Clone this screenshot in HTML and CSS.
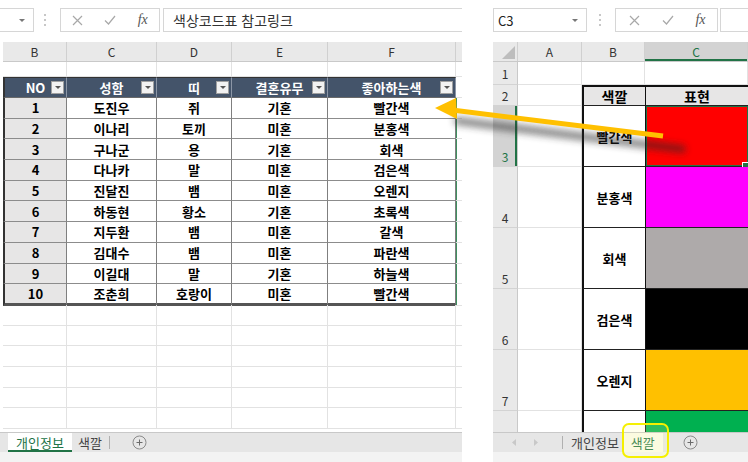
FILE: index.html
```html
<!DOCTYPE html>
<html lang="ko">
<head>
<meta charset="utf-8">
<title>색상코드표</title>
<link rel="stylesheet" href="styles.css">
</head>
<body>
<div class="screen">
  <section class="pane pane-left">
    <div class="fbar">
      <div class="namebox nb-left"><span class="dd"></span></div>
      <div class="grip"><svg width="4" height="14" viewBox="0 0 4 14"><circle cx="2" cy="2" r="1" fill="#b4b4b4"/><circle cx="2" cy="7" r="1" fill="#b4b4b4"/><circle cx="2" cy="12" r="1" fill="#b4b4b4"/></svg></div>
      <div class="btns">
        <span class="ib"><svg width="11" height="11" viewBox="0 0 11 11"><path d="M1 1L10 10M10 1L1 10" stroke="#a8a8a8" stroke-width="1.2"/></svg></span>
        <span class="ib"><svg width="12" height="10" viewBox="0 0 12 10"><path d="M1 5.5L4.5 9L11 1" stroke="#a8a8a8" stroke-width="1.2" fill="none"/></svg></span>
        <span class="ib fx">fx</span>
      </div>
      <div class="formula">색상코드표 참고링크</div>
    </div>

    <div class="lcols colhdr">
      <div>B</div><div>C</div><div>D</div><div>E</div><div>F</div><div class="edge"></div>
    </div>

    <div class="lsheet">
      <div class="lrow r-first"><div></div><div></div><div></div><div></div><div></div><div></div></div>
      <div class="lrow thead">
        <div class="th c-b">NO<span class="fb"></span></div>
        <div class="th">성함<span class="fb"></span></div>
        <div class="th">띠<span class="fb"></span></div>
        <div class="th">결혼유무<span class="fb"></span></div>
        <div class="th">좋아하는색<span class="fb"></span></div>
        <div class="x"></div>
      </div>
      <div class="lrow tr"><div class="td no">1</div><div class="td">도진우</div><div class="td">쥐</div><div class="td">기혼</div><div class="td">빨간색</div><div class="x g"></div></div>
      <div class="lrow tr"><div class="td no">2</div><div class="td">이나리</div><div class="td">토끼</div><div class="td">미혼</div><div class="td">분홍색</div><div class="x g"></div></div>
      <div class="lrow tr"><div class="td no">3</div><div class="td">구나군</div><div class="td">용</div><div class="td">기혼</div><div class="td">회색</div><div class="x g"></div></div>
      <div class="lrow tr"><div class="td no">4</div><div class="td">다나카</div><div class="td">말</div><div class="td">미혼</div><div class="td">검은색</div><div class="x g"></div></div>
      <div class="lrow tr"><div class="td no">5</div><div class="td">진달진</div><div class="td">뱀</div><div class="td">미혼</div><div class="td">오렌지</div><div class="x g"></div></div>
      <div class="lrow tr"><div class="td no">6</div><div class="td">하동현</div><div class="td">황소</div><div class="td">기혼</div><div class="td">초록색</div><div class="x g"></div></div>
      <div class="lrow tr"><div class="td no">7</div><div class="td">지두환</div><div class="td">뱀</div><div class="td">미혼</div><div class="td">갈색</div><div class="x g"></div></div>
      <div class="lrow tr"><div class="td no">8</div><div class="td">김대수</div><div class="td">뱀</div><div class="td">미혼</div><div class="td">파란색</div><div class="x g"></div></div>
      <div class="lrow tr"><div class="td no">9</div><div class="td">이길대</div><div class="td">말</div><div class="td">기혼</div><div class="td">하늘색</div><div class="x g"></div></div>
      <div class="lrow tr last"><div class="td no">10</div><div class="td">조춘희</div><div class="td">호랑이</div><div class="td">미혼</div><div class="td">빨간색</div><div class="x g"></div></div>
      <div class="lrow"><div></div><div></div><div></div><div></div><div></div><div></div></div>
      <div class="lrow"><div></div><div></div><div></div><div></div><div></div><div></div></div>
      <div class="lrow"><div></div><div></div><div></div><div></div><div></div><div></div></div>
      <div class="lrow"><div></div><div></div><div></div><div></div><div></div><div></div></div>
      <div class="lrow"><div></div><div></div><div></div><div></div><div></div><div></div></div>
      <div class="lrow"><div></div><div></div><div></div><div></div><div></div><div></div></div>
    </div>

    <div class="tabbar tabbar-left">
      <div class="tab active">개인정보</div>
      <div class="tab">색깔</div>
      <div class="sep"></div>
      <div class="plus"><svg width="15" height="15" viewBox="0 0 15 15"><circle cx="7.5" cy="7.5" r="6.5" fill="none" stroke="#8a8a8a"/><path d="M7.5 4.5V10.5M4.5 7.5H10.5" stroke="#6a6a6a"/></svg></div>
    </div>
    <div class="strip"></div>
  </section>

  <section class="pane pane-right">
    <div class="fbar">
      <div class="namebox nb-right"><span class="nbtext">C3</span><span class="dd"></span></div>
      <div class="grip grip-r"><svg width="4" height="14" viewBox="0 0 4 14"><circle cx="2" cy="2" r="1" fill="#b4b4b4"/><circle cx="2" cy="7" r="1" fill="#b4b4b4"/><circle cx="2" cy="12" r="1" fill="#b4b4b4"/></svg></div>
      <div class="btns btns-r">
        <span class="ib"><svg width="11" height="11" viewBox="0 0 11 11"><path d="M1 1L10 10M10 1L1 10" stroke="#a8a8a8" stroke-width="1.2"/></svg></span>
        <span class="ib"><svg width="12" height="10" viewBox="0 0 12 10"><path d="M1 5.5L4.5 9L11 1" stroke="#a8a8a8" stroke-width="1.2" fill="none"/></svg></span>
        <span class="ib fx">fx</span>
      </div>
      <div class="formula formula-r"></div>
    </div>

    <div class="rcols colhdr">
      <div class="corner"><span class="tri"></span></div><div>A</div><div>B</div><div class="selcol">C</div>
    </div>

    <div class="rsheet">
      <div class="rh">1</div><div class="gc"></div><div class="gc"></div><div class="gc"></div>
      <div class="rh">2</div><div class="gc"></div><div class="tb th2 top">색깔</div><div class="tc th2 top">표현</div>
      <div class="rh selrow">3</div><div class="gc ga-sel"></div><div class="tb">빨간색</div><div class="tc sw selcell red"></div>
      <div class="rh">4</div><div class="gc"></div><div class="tb">분홍색</div><div class="tc sw magenta"></div>
      <div class="rh">5</div><div class="gc"></div><div class="tb">회색</div><div class="tc sw gray"></div>
      <div class="rh">6</div><div class="gc"></div><div class="tb">검은색</div><div class="tc sw black"></div>
      <div class="rh">7</div><div class="gc"></div><div class="tb">오렌지</div><div class="tc sw orange"></div>
      <div class="rh"></div><div class="gc"></div><div class="tb"></div><div class="tc sw green"></div>
    </div>

    <div class="tabbar tabbar-right">
      <div class="nav"><svg width="8" height="9" viewBox="0 0 8 9"><path d="M6 1L2 4.5L6 8" fill="#c8c8c8"/></svg></div>
      <div class="nav"><svg width="8" height="9" viewBox="0 0 8 9"><path d="M2 1L6 4.5L2 8" fill="#c8c8c8"/></svg></div>
      <div class="sep sep-r"></div>
      <div class="tab tab-r">개인정보</div>
      <div class="tab active-r">색깔</div>
      <div class="plus plus-r"><svg width="15" height="15" viewBox="0 0 15 15"><circle cx="7.5" cy="7.5" r="6.5" fill="none" stroke="#8a8a8a"/><path d="M7.5 4.5V10.5M4.5 7.5H10.5" stroke="#6a6a6a"/></svg></div>
    </div>
    <div class="strip"></div>
  </section>

  <svg class="arrow" width="748" height="462" viewBox="0 0 748 462">
    <defs>
      <filter id="sh" x="-20%" y="-200%" width="140%" height="500%"><feGaussianBlur stdDeviation="3.5"/></filter>
    </defs>
    <line x1="458" y1="121" x2="682" y2="149" stroke="#2a2a2a" stroke-width="8" stroke-linecap="round" opacity="0.55" filter="url(#sh)"/>
    <line x1="452" y1="110" x2="663" y2="136" stroke="#FFC000" stroke-width="5"/>
    <polygon points="435,108 456,98 457,119" fill="#FFC000"/>
  </svg>
  <div class="mark"></div>
</div>
</body>
</html>
```

FILE: styles.css
```css
* { box-sizing: border-box; }
html, body { margin: 0; padding: 0; background: #ffffff; }
body {
  font-family: "Noto Sans CJK KR", "Noto Sans", sans-serif;
  color: #000;
}
.screen {
  position: relative;
  width: 748px;
  height: 462px;
  overflow: hidden;
  display: flex;
  gap: 31px;
}
.pane {
  display: flex;
  flex-direction: column;
  overflow: hidden;
  height: 462px;
}
.pane-left { width: 462px; }
.pane-right { width: 255px; }

/* formula bar */
.fbar {
  margin-top: 8px;
  height: 24px;
  display: flex;
  align-items: stretch;
  flex: none;
}
.namebox {
  position: relative;
  border: 1px solid #d6d6d6;
  background: #fff;
  display: flex;
  align-items: center;
}
.nb-left { width: 34px; border-left: none; }
.nb-right { width: 94px; }
.nbtext { font-size: 13px; color: #222; padding-left: 4px; }
.dd {
  position: absolute;
  right: 8px;
  top: 10px;
  width: 0; height: 0;
  border-left: 3px solid transparent;
  border-right: 3px solid transparent;
  border-top: 3px solid #777;
}
.grip {
  width: 22px;
  margin-right: 4px;
  display: flex;
  align-items: center;
  justify-content: center;
}
.grip-r { width: 26px; margin-right: 2px; }
.btns {
  width: 100px;
  border: 1px solid #d6d6d6;
  display: flex;
  align-items: center;
}
.btns-r { width: 103px; padding-left: 2px; }
.ib {
  width: 33px;
  display: flex;
  align-items: center;
  justify-content: center;
}
.fx {
  font-family: "Liberation Serif", serif;
  font-style: italic;
  font-size: 14px;
  color: #555;
}
.formula {
  flex: 1;
  margin-left: 3px;
  border: 1px solid #d6d6d6;
  border-right: none;
  font-size: 14px;
  color: #333;
  padding-left: 9px;
  display: flex;
  align-items: center;
}
.formula-r { margin-left: 2px; }

/* column headers */
.colhdr {
  margin-top: 10px;
  height: 20px;
  flex: none;
  display: grid;
  background: #e9e9e9;
  border-bottom: 1px solid #c9c9c9;
}
.colhdr > div {
  border-right: 1px solid #d0d0d0;
  font-size: 12px;
  color: #333;
  display: flex;
  align-items: center;
  justify-content: center;
}
.lcols {
  grid-template-columns: 64px 90px 75px 96px 128px 6px;
  margin-left: 3px;
}
.lcols .edge { border-right: none; background: #e9e9e9; }
.rcols { grid-template-columns: 25px 64px 63px 103px; }
.corner { position: relative; }
.tri {
  position: absolute;
  right: 2px;
  bottom: 2px;
  width: 0; height: 0;
  border-left: 13px solid transparent;
  border-bottom: 13px solid #bdbdbd;
}
.selcol {
  background: #d3d3d3;
  color: #217346 !important;
  box-shadow: inset 0 -2px 0 #217346;
}

/* left sheet */
.lsheet {
  height: 370px;
  flex: none;
  overflow: hidden;
  padding-left: 3px;
}
.lrow {
  display: grid;
  grid-template-columns: 64px 90px 75px 96px 128px 6px;
  height: 20.7px;
}
.lrow > div {
  border-right: 1px solid #e2e2e2;
  border-bottom: 1px solid #e2e2e2;
  display: flex;
  align-items: center;
  justify-content: center;
  font-size: 13px;
  font-weight: 700;
}
.lrow > div:last-child { border-right: none; }
.r-first { height: 15px; }
.thead { height: 21px; }
.thead .th {
  position: relative;
  background: #44546a;
  color: #fff;
  border-right: 1px solid #8c96a6;
  border-bottom: 1px solid #6a6a6a;
  border-top: 1px solid #333;
}
.thead .c-b { border-left: 2px solid #333; }
.fb {
  position: absolute;
  right: 2px;
  top: 3px;
  width: 13px;
  height: 13px;
  background: #f2f2f2;
  border: 1px solid #a0a0a0;
}
.fb::after {
  content: "";
  position: absolute;
  left: 3px;
  top: 4px;
  border-left: 3px solid transparent;
  border-right: 3px solid transparent;
  border-top: 3px solid #555;
}
.tr .td {
  border-right: 1px solid #7f7f7f;
  border-bottom: 1px solid #8c8c8c;
  background: #fff;
}
.tr .no {
  background: #e7e6e6;
  border-left: 2px solid #333;
}
.tr.last .td { border-bottom: 3px solid #555; }
.x.g { box-shadow: inset 1px 0 0 #3f8f5f; }

/* right sheet */
.rsheet {
  height: 370px;
  flex: none;
  overflow: hidden;
  display: grid;
  grid-template-columns: 25px 64px 63px 103px;
  grid-template-rows: 23px 21px 61px 61px 61px 61px 61px 61px;
}
.rh {
  background: #e9e9e9;
  border-right: 1px solid #c9c9c9;
  border-bottom: 1px solid #d3d3d3;
  font-size: 12px;
  color: #333;
  display: flex;
  justify-content: center;
  align-items: flex-end;
  padding-bottom: 1px;
}
.rh:nth-child(1), .rh:nth-child(5) { align-items: center; padding-bottom: 0; }
.selrow {
  background: #d3d3d3;
  color: #217346;
  box-shadow: inset -2px 0 0 #217346;
}
.gc {
  border-right: 1px solid #e2e2e2;
  border-bottom: 1px solid #e2e2e2;
}
.tb, .tc {
  font-size: 13px;
  font-weight: 700;
  display: flex;
  align-items: center;
  justify-content: center;
  border-bottom: 1px solid #222;
}
.tb { border-left: 2px solid #111; }
.tc { border-left: 1.5px solid #111; }
.th2 { background: #e7e6e6; font-size: 14px; }
.top { border-top: 2px solid #111; }
.sw { position: relative; }
.red { background: #ff0000; }
.magenta { background: #ff00ff; }
.gray { background: #aeaaaa; }
.black { background: #000; }
.orange { background: #ffc000; }
.green { background: #00b050; }
.selcell { box-shadow: inset 0 0 0 1px #217346; }
.selcell::after {
  content: "";
  position: absolute;
  right: -1px;
  bottom: -3px;
  width: 5px;
  height: 5px;
  background: #217346;
  border: 1px solid #fff;
}

/* tab bars */
.tabbar {
  height: 20px;
  flex: none;
  background: #e6e6e6;
  border-top: 1px solid #c8c8c8;
  display: flex;
  align-items: stretch;
  font-size: 13px;
}
.tabbar-left { padding-left: 8px; }
.tab {
  display: flex;
  align-items: center;
  padding: 0 6px;
  color: #444;
}
.tabbar-left .tab.active {
  width: 64px;
  justify-content: center;
  background: #fff;
  color: #217346;
  box-shadow: inset 0 -2px 0 #217346;
}
.sep {
  width: 1px;
  background: #b0b0b0;
  margin: 3px 0 3px 1px;
}
.plus {
  margin-left: 22px;
  display: flex;
  align-items: center;
}
.tabbar-right { padding-left: 10px; }
.nav {
  width: 22px;
  display: flex;
  align-items: center;
  justify-content: center;
}
.sep-r { margin-left: 15px; margin-right: 2px; }
.tabbar-right .tab-r { padding: 0 4px 0 6px; }
.active-r {
  background: #fbfbee;
  color: #217346 !important;
  padding: 0 8px !important;
}
.plus-r { margin-left: 20px; }
.strip {
  flex: 1;
  background: #f3f3f3;
}

/* overlays */
.arrow {
  position: absolute;
  left: 0;
  top: 0;
  pointer-events: none;
}
.mark {
  position: absolute;
  left: 622px;
  top: 423px;
  width: 47px;
  height: 35px;
  border: 2px solid #f5f000;
  border-radius: 7px;
  background: rgba(255, 255, 160, 0.18);
  pointer-events: none;
}
```
